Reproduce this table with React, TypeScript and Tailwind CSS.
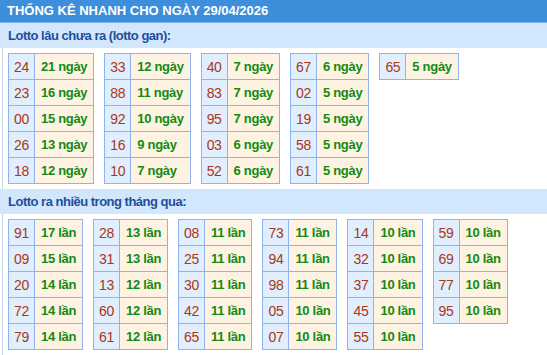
const ganTables: [string, string][][] = [
  [["24", "21 ngày"], ["23", "16 ngày"], ["00", "15 ngày"], ["26", "13 ngày"], ["18", "12 ngày"]],
  [["33", "12 ngày"], ["88", "11 ngày"], ["92", "10 ngày"], ["16", "9 ngày"], ["10", "7 ngày"]],
  [["40", "7 ngày"], ["83", "7 ngày"], ["95", "7 ngày"], ["03", "6 ngày"], ["52", "6 ngày"]],
  [["67", "6 ngày"], ["02", "5 ngày"], ["19", "5 ngày"], ["58", "5 ngày"], ["61", "5 ngày"]],
  [["65", "5 ngày"]],
];

const monthTables: [string, string][][] = [
  [["91", "17 lần"], ["09", "15 lần"], ["20", "14 lần"], ["72", "14 lần"], ["79", "14 lần"]],
  [["28", "13 lần"], ["31", "13 lần"], ["13", "12 lần"], ["60", "12 lần"], ["61", "12 lần"]],
  [["08", "11 lần"], ["25", "11 lần"], ["30", "11 lần"], ["42", "11 lần"], ["65", "11 lần"]],
  [["73", "11 lần"], ["94", "11 lần"], ["98", "11 lần"], ["05", "10 lần"], ["07", "10 lần"]],
  [["14", "10 lần"], ["32", "10 lần"], ["37", "10 lần"], ["45", "10 lần"], ["55", "10 lần"]],
  [["59", "10 lần"], ["69", "10 lần"], ["77", "10 lần"], ["95", "10 lần"]],
];

function StatTable({ rows }: { rows: [string, string][] }) {
  return (
    <table className="border-collapse">
      <tbody>
        {rows.map(([num, count]) => (
          <tr key={num} className="h-[26px]">
            <td className="border border-[#8db3f0] bg-[#e1eefd] px-[5px] text-[14px] tracking-[-0.3px] text-[#a83816] text-center leading-none">
              {num}
            </td>
            <td className="border border-[#8db3f0] bg-[#fef3e2] px-[6px] text-[13px] tracking-[-0.3px] font-bold text-[#138a13] leading-none whitespace-nowrap">
              {count}
            </td>
          </tr>
        ))}
      </tbody>
    </table>
  );
}

function Section({ title, tables }: { title: string; tables: [string, string][][] }) {
  return (
    <div>
      <div className="h-[25px] bg-[#d3e7fc] pl-[8px] flex items-center text-[13px] tracking-[-0.5px] font-bold text-[#1c4f9e]">
        {title}
      </div>
      <div className="ml-[2px] border-l border-[#c9d7ea] pl-[5px] py-[5px] flex flex-wrap items-start gap-[10px]">
        {tables.map((rows, i) => (
          <StatTable key={i} rows={rows} />
        ))}
      </div>
    </div>
  );
}

export default function App() {
  return (
    <div className="w-[547px] h-[355px] overflow-hidden bg-white font-['Liberation_Sans',Arial,sans-serif]">
      <div className="h-[23px] bg-[#3d8edb] pl-[7px] flex items-center text-[13px] font-bold text-white border-b border-[#7fb4e8]">
        THỐNG KÊ NHANH CHO NGÀY 29/04/2026
      </div>
      <Section title="Lotto lâu chưa ra (lotto gan):" tables={ganTables} />
      <Section title="Lotto ra nhiều trong tháng qua:" tables={monthTables} />
    </div>
  );
}
